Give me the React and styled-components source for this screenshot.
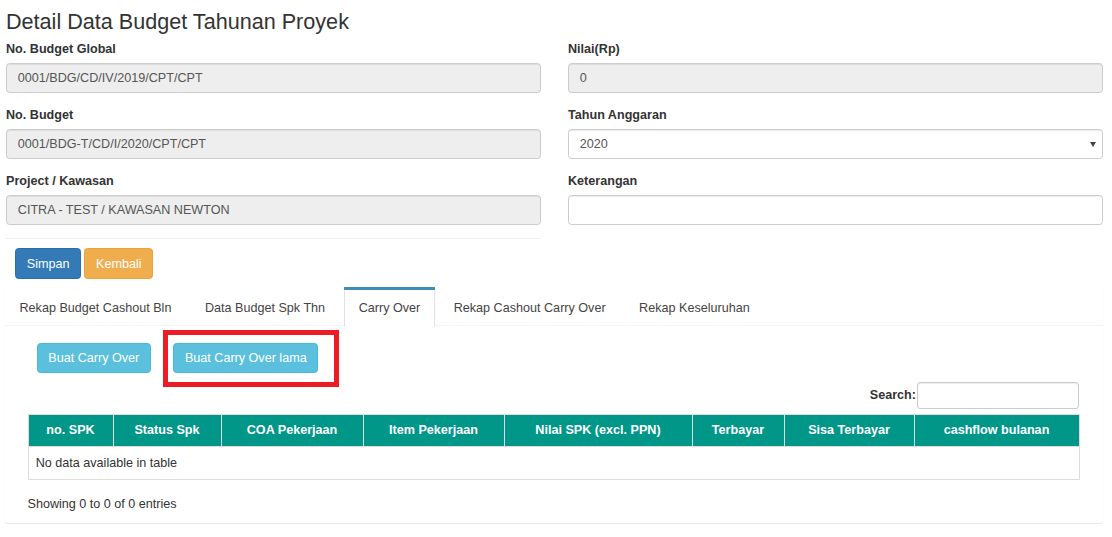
import React from 'react';
import styled, { createGlobalStyle, css } from 'styled-components';

const GlobalStyle = createGlobalStyle`
  html, body { margin: 0; padding: 0; background: #fff; }
  body {
    font-family: "Liberation Sans", Arial, Helvetica, sans-serif;
    font-size: 12.6px;
    line-height: 18px;
    color: #333;
  }
  *, *::before, *::after { box-sizing: border-box; }
`;

const Page = styled.div`
  padding: 0 9px 0 6px;
`;

const Title = styled.h3`
  margin: 10px 0 0;
  font-size: 21.6px;
  line-height: 23.76px;
  font-weight: 500;
  color: #333;
`;

const FormRow = styled.div`
  display: grid;
  grid-template-columns: 1fr 1fr;
  column-gap: 27px;
  margin-top: 6.5px;
  align-items: start;
`;

const Column = styled.div`
  min-width: 0;
`;

const FormGroup = styled.div`
  margin-bottom: 12.8px;
`;

const Label = styled.label`
  display: block;
  font-weight: 700;
  line-height: 18px;
  margin-bottom: 4.5px;
  color: #333;
`;

const fieldBase = css`
  display: block;
  width: 100%;
  height: 30.6px;
  padding: 5.4px 10.8px;
  font-family: inherit;
  font-size: 12.6px;
  line-height: 18px;
  color: #555;
  border: 1px solid #ccc;
  border-radius: 3.6px;
  box-shadow: inset 0 1px 1px rgba(0, 0, 0, 0.075);
  outline: none;
`;

const Input = styled.input`
  ${fieldBase};
  background: ${(p) => (p.readOnly ? '#eee' : '#fff')};
`;

const SelectWrap = styled.div`
  position: relative;
  &::after {
    content: '';
    position: absolute;
    right: 7px;
    top: 50%;
    margin-top: -2px;
    border-left: 3px solid transparent;
    border-right: 3px solid transparent;
    border-top: 5px solid #444;
    pointer-events: none;
  }
`;

const Select = styled.select`
  ${fieldBase};
  appearance: none;
  -webkit-appearance: none;
  background: #fff;
  padding-left: 10.8px;
`;

const FormFooter = styled.div`
  border-top: 1px solid #f0f0f0;
  padding: 9.2px 9px 7.6px;
  display: flex;
  gap: 3px;
`;

const variants = {
  primary: { bg: '#337ab7', border: '#2e6da4' },
  warning: { bg: '#f0ad4e', border: '#eea236' },
  info: { bg: '#5bc0de', border: '#46b8da' },
};

const Button = styled.button`
  display: inline-block;
  padding: 5.4px 10.8px;
  font-family: inherit;
  font-size: 12.6px;
  line-height: 18px;
  color: #fff;
  white-space: nowrap;
  background: ${(p) => variants[p.$variant].bg};
  border: 1px solid ${(p) => variants[p.$variant].border};
  border-radius: 3.6px;
  cursor: pointer;
`;

const TabsBox = styled.div`
  background: #fff;
  border-radius: 3px;
  box-shadow: 0 1px 1px rgba(0, 0, 0, 0.1);
  margin: 0 0 18px -1px;
`;

const TabList = styled.ul`
  display: flex;
  list-style: none;
  margin: 0;
  padding: 0;
  border-bottom: 1px solid #f4f4f4;
`;

const TabItem = styled.li`
  border-top: 3px solid ${(p) => (p.$active ? '#3c8dbc' : 'transparent')};
  margin-right: 4.5px;
  margin-bottom: -2px;
`;

const TabLink = styled.a`
  display: block;
  padding: 8.5px 13.5px;
  line-height: 18px;
  color: #444;
  text-decoration: none;
  border: 1px solid transparent;
  cursor: pointer;
  ${(p) =>
    p.$active &&
    css`
      background: #fff;
      border-left-color: #e2e2e2;
      border-right-color: #e2e2e2;
    `}
`;

const TabContent = styled.div`
  padding: 9px 9px 10px;
`;

const Pane = styled.div`
  padding: 0 15px 0 13.5px;
`;

const ActionRow = styled.div`
  display: flex;
  gap: 22px;
  padding: 8px 9px 0;
`;

const Annotated = styled.div`
  position: relative;
  display: inline-block;
`;

const AnnotationBox = styled.div`
  position: absolute;
  left: -10px;
  top: -12.6px;
  right: -20.6px;
  bottom: -14px;
  border: 5px solid #ed1c24;
  pointer-events: none;
`;

const FilterRow = styled.div`
  display: flex;
  justify-content: flex-end;
  align-items: center;
  margin-top: 8.5px;
`;

const SearchLabel = styled.label`
  display: flex;
  align-items: center;
  font-weight: 700;
  color: #333;
`;

const SearchInput = styled.input`
  width: 162px;
  height: 27px;
  margin-left: 1px;
  padding: 4.5px 9px;
  font-family: inherit;
  font-size: 11px;
  border: 1px solid #ccc;
  border-radius: 3px;
  box-shadow: inset 0 1px 1px rgba(0, 0, 0, 0.075);
  outline: none;
`;

const Table = styled.table`
  width: 100%;
  table-layout: fixed;
  border-collapse: collapse;
  margin: 5.4px 0;
  border: 1px solid #ddd;
`;

const Th = styled.th`
  width: ${(p) => p.$w}px;
  background: #009688;
  color: #fff;
  font-weight: 700;
  text-align: center;
  padding: 6.3px 7.2px;
  line-height: 18px;
  border: 1px solid #ddd;
  white-space: nowrap;
`;

const Td = styled.td`
  padding: 7.2px;
  line-height: 18px;
  border: 1px solid #ddd;
  color: #333;
`;

const Info = styled.div`
  padding-top: 9.7px;
  line-height: 18px;
  color: #333;
`;

const columns = [
  { label: 'no. SPK', w: 85 },
  { label: 'Status Spk', w: 108 },
  { label: 'COA Pekerjaan', w: 142 },
  { label: 'Item Pekerjaan', w: 141 },
  { label: 'Nilai SPK (excl. PPN)', w: 188 },
  { label: 'Terbayar', w: 92 },
  { label: 'Sisa Terbayar', w: 130 },
  { label: 'cashflow bulanan', w: 165 },
];

const tabs = [
  'Rekap Budget Cashout Bln',
  'Data Budget Spk Thn',
  'Carry Over',
  'Rekap Cashout Carry Over',
  'Rekap Keseluruhan',
];

export default function App() {
  return (
    <>
      <GlobalStyle />
      <Page>
        <Title>Detail Data Budget Tahunan Proyek</Title>
        <FormRow>
          <Column>
            <FormGroup>
              <Label>No. Budget Global</Label>
              <Input readOnly value="0001/BDG/CD/IV/2019/CPT/CPT" />
            </FormGroup>
            <FormGroup>
              <Label>No. Budget</Label>
              <Input readOnly value="0001/BDG-T/CD/I/2020/CPT/CPT" />
            </FormGroup>
            <FormGroup>
              <Label>Project / Kawasan</Label>
              <Input readOnly value="CITRA - TEST / KAWASAN NEWTON" />
            </FormGroup>
            <FormFooter>
              <Button $variant="primary">Simpan</Button>
              <Button $variant="warning">Kembali</Button>
            </FormFooter>
          </Column>
          <Column>
            <FormGroup>
              <Label>Nilai(Rp)</Label>
              <Input readOnly value="0" />
            </FormGroup>
            <FormGroup>
              <Label>Tahun Anggaran</Label>
              <SelectWrap>
                <Select defaultValue="2020">
                  <option value="2020">2020</option>
                </Select>
              </SelectWrap>
            </FormGroup>
            <FormGroup>
              <Label>Keterangan</Label>
              <Input defaultValue="" />
            </FormGroup>
          </Column>
        </FormRow>

        <TabsBox>
          <TabList>
            {tabs.map((t) => (
              <TabItem key={t} $active={t === 'Carry Over'}>
                <TabLink $active={t === 'Carry Over'}>{t}</TabLink>
              </TabItem>
            ))}
          </TabList>
          <TabContent>
            <Pane>
              <ActionRow>
                <Button $variant="info">Buat Carry Over</Button>
                <Annotated>
                  <Button $variant="info">Buat Carry Over lama</Button>
                  <AnnotationBox />
                </Annotated>
              </ActionRow>
              <FilterRow>
                <SearchLabel>
                  Search:
                  <SearchInput type="search" />
                </SearchLabel>
              </FilterRow>
              <Table>
                <thead>
                  <tr>
                    {columns.map((c) => (
                      <Th key={c.label} $w={c.w}>
                        {c.label}
                      </Th>
                    ))}
                  </tr>
                </thead>
                <tbody>
                  <tr>
                    <Td colSpan={8}>No data available in table</Td>
                  </tr>
                </tbody>
              </Table>
              <Info>Showing 0 to 0 of 0 entries</Info>
            </Pane>
          </TabContent>
        </TabsBox>
      </Page>
    </>
  );
}
